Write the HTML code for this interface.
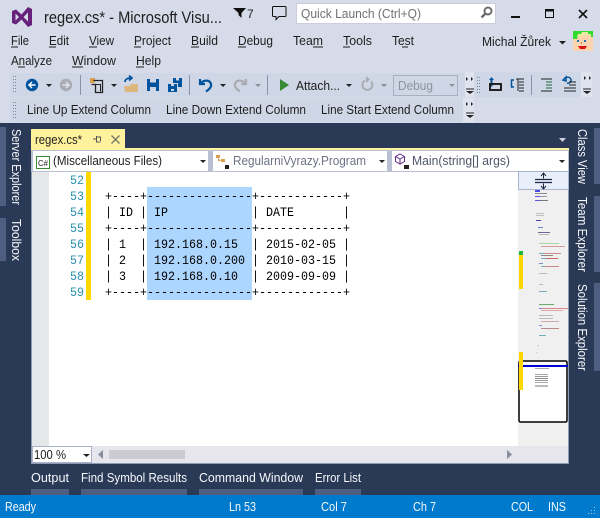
<!DOCTYPE html>
<html><head><meta charset="utf-8"><style>
html,body{margin:0;padding:0;background:#d6dbe9;width:600px;height:518px;overflow:hidden}
svg{display:block}
text{font-family:"Liberation Sans",sans-serif;font-size:12.5px;fill:#1e1e1e;white-space:pre}
.m{font-family:"Liberation Mono",monospace;font-size:12.5px;fill:#000}
.ln{font-family:"Liberation Mono",monospace;font-size:12.5px;fill:#2b91af}
.w{fill:#f6f8fb}
</style></head><body>
<svg width="600" height="518" viewBox="0 0 600 518" xmlns="http://www.w3.org/2000/svg">
<rect width="600" height="518" fill="#d6dbe9"/>
<!-- VS logo -->
<path d="M12 11l4-1.500 5.500 5L28 7l4 2v16l-4 2-6.500-7.500L16 24.500 12 23zM15.500 13.500v7l3.500-3.500zM28 12.500l-4.500 4.500 4.500 4.500z" fill="#68217a" fill-rule="evenodd"/>
<text x="44" y="23" style="font-size:16.5px" textLength="178" lengthAdjust="spacingAndGlyphs">regex.cs* - Microsoft Visu...</text>
<path d="M233 8h13l-4.500 5v5l-3-3v-2z" fill="#111"/>
<text x="247" y="18" style="font-size:12px" fill="#222">7</text>
<path d="M273.500 6.500h11.500a1 1 0 0 1 1 1v8a1 1 0 0 1-1 1h-6l-3 3v-3h-2.500a1 1 0 0 1-1-1v-8a1 1 0 0 1 1-1z" fill="none" stroke="#111" stroke-width="1"/>
<rect x="296.500" y="3.500" width="199" height="20" fill="#fff" stroke="#c9cedb"/>
<text x="301" y="18" style="font-size:13px;fill:#707070" textLength="120" lengthAdjust="spacingAndGlyphs">Quick Launch (Ctrl+Q)</text>
<circle cx="488" cy="11" r="3.500" fill="none" stroke="#6e6e6e" stroke-width="2"/>
<path d="M485.500 13.500l-4 4" stroke="#6e6e6e" stroke-width="2.500" fill="none"/>
<rect x="511" y="16" width="9" height="2" fill="#111"/>
<path d="M545.500 9.500h8v8h-8z" fill="none" stroke="#111"/><rect x="545" y="9" width="9" height="2.500" fill="#111"/>
<path d="M579 10l8 8M587 10l-8 8" stroke="#111" stroke-width="1.600" fill="none"/>
<!-- menu -->
<g fill="#1e1e1e">
<text x="11" y="45" textLength="18" lengthAdjust="spacingAndGlyphs">File</text>
<text x="49" y="45" textLength="20" lengthAdjust="spacingAndGlyphs">Edit</text>
<text x="89" y="45" textLength="25" lengthAdjust="spacingAndGlyphs">View</text>
<text x="134" y="45" textLength="37" lengthAdjust="spacingAndGlyphs">Project</text>
<text x="191" y="45" textLength="27" lengthAdjust="spacingAndGlyphs">Build</text>
<text x="238" y="45" textLength="35" lengthAdjust="spacingAndGlyphs">Debug</text>
<text x="293" y="45" textLength="30" lengthAdjust="spacingAndGlyphs">Team</text>
<text x="343" y="45" textLength="29" lengthAdjust="spacingAndGlyphs">Tools</text>
<text x="392" y="45" textLength="22" lengthAdjust="spacingAndGlyphs">Test</text>
<text x="11" y="65" textLength="41" lengthAdjust="spacingAndGlyphs">Analyze</text>
<text x="72" y="65" textLength="44" lengthAdjust="spacingAndGlyphs">Window</text>
<text x="136" y="65" textLength="25" lengthAdjust="spacingAndGlyphs">Help</text>
<path d="M11 47h7M49 47h7M89 47h8M134 47h7M191 47h8M238 47h8M313 47h10M343 47h7M402 47h6M18 67h7M72 67h11M136 67h8" stroke="#1e1e1e" stroke-width="1"/>
</g>
<text x="482" y="46" textLength="69" lengthAdjust="spacingAndGlyphs">Michal Žůrek</text>
<path d="M559 41h7l-3.500 3.500z" fill="#222"/>
<!-- avatar -->
<rect x="573" y="31" width="20" height="20" fill="#fcd5b0"/>
<path d="M573 31h20v6h-2v-2h-3v-1h-6l-1 2h-3l-1 3h-4z" fill="#2fdc2f"/>
<path d="M577 37l1-3h3l1-2h6v2h3v2l-3-1h-4l-2 2h-3z" fill="#e8e89e"/>
<rect x="577" y="40" width="2" height="2" fill="#2c6fb0"/><rect x="584" y="40" width="2" height="2" fill="#2c6fb0"/>
<rect x="581" y="42" width="1" height="2" fill="#c08060"/>
<path d="M578 46h9l-2 3h-5z" fill="#e01010"/>
<!-- toolbars -->
<rect x="10" y="73" width="455" height="24" fill="#cfd6e5"/>
<rect x="465" y="72" width="9" height="25" fill="#dfe3ee"/>
<rect x="474" y="72" width="107" height="25" fill="#cfd6e5"/>
<rect x="581" y="72" width="11" height="25" fill="#dfe3ee"/>
<rect x="10" y="98" width="453" height="24" fill="#cfd6e5"/>
<rect x="463" y="98" width="11" height="24" fill="#dfe3ee"/>
<g fill="#7f8a9e">
<path d="M13 76h1v1h-1zM15 76h1v1h-1zM13 79h1v1h-1zM15 79h1v1h-1zM13 82h1v1h-1zM15 82h1v1h-1zM13 85h1v1h-1zM15 85h1v1h-1zM13 88h1v1h-1zM15 88h1v1h-1zM13 91h1v1h-1zM15 91h1v1h-1z"/>
<path d="M13 102h1v1h-1zM15 102h1v1h-1zM13 105h1v1h-1zM15 105h1v1h-1zM13 108h1v1h-1zM15 108h1v1h-1zM13 111h1v1h-1zM15 111h1v1h-1zM13 114h1v1h-1zM15 114h1v1h-1zM13 117h1v1h-1zM15 117h1v1h-1z"/>
<path d="M477 77h1v1h-1zM479 77h1v1h-1zM477 80h1v1h-1zM479 80h1v1h-1zM477 83h1v1h-1zM479 83h1v1h-1zM477 86h1v1h-1zM479 86h1v1h-1zM477 89h1v1h-1zM479 89h1v1h-1zM477 92h1v1h-1zM479 92h1v1h-1z"/>
</g>
<circle cx="32" cy="85" r="6.200" fill="#00539c"/>
<path d="M35.500 85h-6M32 82l-3 3 3 3" stroke="#fff" stroke-width="1.500" fill="none"/>
<path d="M46 84h6l-3 3z" fill="#222"/>
<circle cx="66" cy="85" r="6.200" fill="#a9acb2"/>
<path d="M62.500 85h6M66 82l3 3-3 3" stroke="#dfe2e8" stroke-width="1.500" fill="none"/>
<rect x="80" y="75" width="1" height="20" fill="#8a93a5"/>
<rect x="90" y="78" width="5" height="5" fill="#d8a04a"/>
<path d="M93.500 80.500h9v12h-7v-8h-4" fill="none" stroke="#222" stroke-width="1.300"/>
<path d="M95.500 84.500h5v7" fill="none" stroke="#222"/>
<path d="M111 84h6l-3 3z" fill="#222"/>
<path d="M124 86h6l1-2h7v8h-13z" fill="#dcb67a"/>
<path d="M125 82c0-3 3-4 6-4M129 75.500l3 2.500-3 2.500" fill="none" stroke="#00539c" stroke-width="1.700"/>
<path d="M147 79h12v12h-12z" fill="#00539c"/><rect x="150" y="79" width="6" height="3.500" fill="#cfd6e5"/><rect x="150" y="87" width="6" height="4" fill="#cfd6e5"/>
<path d="M168 84h9v8h-9zM173 78h9v9h-4v-4h-5z" fill="#00539c"/><rect x="176" y="78" width="3" height="2.500" fill="#cfd6e5"/><rect x="171" y="84" width="3" height="2" fill="#cfd6e5"/><rect x="171" y="89" width="3" height="2" fill="#cfd6e5"/>
<rect x="189" y="75" width="1" height="20" fill="#8a93a5"/>
<path d="M200 79v5h5M200.500 84c2-4 9-5 10.500 0 .7 3-1.500 5-5 7.500" fill="none" stroke="#00539c" stroke-width="2.200"/>
<path d="M220 84h6l-3 3z" fill="#222"/>
<path d="M246 79v5h-5M245.500 84c-2-4-9-5-10.500 0-.7 3 1.500 5 5 7.500" fill="none" stroke="#a9acb2" stroke-width="2.200"/>
<path d="M255 84h6l-3 3z" fill="#888c96"/>
<rect x="267" y="75" width="1" height="20" fill="#8a93a5"/>
<path d="M280 79l9 6-9 6z" fill="#388a34"/>
<text x="296" y="90" textLength="44" lengthAdjust="spacingAndGlyphs">Attach...</text>
<path d="M346 84h6l-3 3z" fill="#222"/>
<path d="M365 80.500a5 5 0 1 0 6 1" fill="none" stroke="#a9acb2" stroke-width="2"/><path d="M366 76v7l4-3.500z" fill="#a9acb2"/>
<path d="M381 84h6l-3 3z" fill="#888c96"/>
<rect x="393.500" y="75.500" width="64" height="20" fill="#cfd6e5" stroke="#a9b0bf"/>
<text x="398" y="90" textLength="35" lengthAdjust="spacingAndGlyphs" style="fill:#8d93a1">Debug</text>
<path d="M449 84h6l-3 3z" fill="#8d93a1"/>
<!-- overflow -->
<path d="M466 77l2 2-2 2zM471 77l2 2-2 2z" fill="#222"/>
<path d="M466 88.500h8v1h-8zM466 91h8l-4 3z" fill="#222"/>
<path d="M584 76l2 2-2 2zM589 76l2 2-2 2z" fill="#222"/>
<path d="M583 88.500h8v1h-8zM583 91h8l-4 3z" fill="#222"/>
<path d="M466 102l2 2-2 2zM471 102l2 2-2 2z" fill="#222"/>
<path d="M466 112.500h8v1h-8zM466 115h8l-4 3z" fill="#222"/>
<!-- right icons -->
<path d="M489 80l5 0-2.500-3z" fill="#00539c"/><path d="M491.500 79.500v7" stroke="#00539c" stroke-width="2"/>
<rect x="490" y="84" width="11" height="6" fill="none" stroke="#222" stroke-width="2"/>
<path d="M514 80h-2.500v7h2.500" fill="none" stroke="#00539c" stroke-width="1.500"/>
<path d="M516 79h8M519 82h5M519 85h5M519 88h5M519 91h5M518 79v12" stroke="#222" stroke-width="1"/>
<rect x="531" y="75" width="1" height="20" fill="#8a93a5"/>
<path d="M546 82h6M546 85h6M546 88h6" stroke="#1f6b3a" stroke-width="1"/><path d="M541 79h11M541 91h11" stroke="#222"/>
<path d="M566 78a3 3 0 1 1 1 5M563 80l3-3v4z" fill="none" stroke="#00539c" stroke-width="1.500"/>
<path d="M569 82h7M569 85h7M564 88h12M564 91h12" stroke="#222" stroke-width="1"/>
<text x="27" y="114" textLength="124" lengthAdjust="spacingAndGlyphs">Line Up Extend Column</text>
<text x="166" y="114" textLength="140" lengthAdjust="spacingAndGlyphs">Line Down Extend Column</text>
<text x="321" y="114" textLength="133" lengthAdjust="spacingAndGlyphs">Line Start Extend Column</text>
<!-- dock -->
<rect x="0" y="123" width="600" height="372" fill="#2a3a56"/>
<rect x="0" y="127" width="6" height="79" fill="#4d5e80"/>
<rect x="0" y="218" width="6" height="43" fill="#4d5e80"/>
<rect x="594" y="128" width="6" height="56" fill="#4d5e80"/>
<rect x="594" y="196" width="6" height="76" fill="#4d5e80"/>
<rect x="594" y="283" width="6" height="88" fill="#4d5e80"/>
<text class="w" transform="translate(12,129) rotate(90)" textLength="76" lengthAdjust="spacingAndGlyphs">Server Explorer</text>
<text class="w" transform="translate(12,219) rotate(90)" textLength="42" lengthAdjust="spacingAndGlyphs">Toolbox</text>
<text class="w" transform="translate(578,129) rotate(90)" textLength="55" lengthAdjust="spacingAndGlyphs">Class View</text>
<text class="w" transform="translate(578,197) rotate(90)" textLength="75" lengthAdjust="spacingAndGlyphs">Team Explorer</text>
<text class="w" transform="translate(578,284) rotate(90)" textLength="87" lengthAdjust="spacingAndGlyphs">Solution Explorer</text>
<!-- tab -->
<rect x="31" y="129" width="94" height="20" fill="#fff29d"/>
<text x="35" y="144" textLength="47" lengthAdjust="spacingAndGlyphs">regex.cs*</text>
<path d="M93 139h3M96.500 136v6h4M96.500 137h4v4" fill="none" stroke="#555"/>
<path d="M111.500 135.500l8 8M119.500 135.500l-8 8" stroke="#7d7b6a" stroke-width="1.500" fill="none"/>
<path d="M559 138h7l-3.500 4z" fill="#cdd2de"/>
<rect x="31" y="148" width="538" height="3" fill="#fff29d"/>
<!-- nav bar -->
<rect x="31" y="150" width="538" height="22" fill="#b8c0d2"/>
<rect x="33" y="151" width="175" height="20" fill="#fff"/>
<rect x="213" y="151" width="174" height="20" fill="#fff"/>
<rect x="392" y="151" width="176" height="20" fill="#fff"/>
<rect x="36.500" y="156.500" width="13" height="12" fill="#fff" stroke="#388a34"/>
<text x="38" y="166" style="font-size:8px;fill:#222" textLength="10" lengthAdjust="spacingAndGlyphs">C#</text>
<text x="53" y="165" textLength="109" lengthAdjust="spacingAndGlyphs">(Miscellaneous Files)</text>
<path d="M200 160h6l-3 3z" fill="#222"/>
<path d="M216 155h4v3h-4zM221 159h4v3h-4zM218 158v3h3" fill="#d8a04a"/><rect x="225" y="165" width="4" height="4" fill="#222"/>
<text x="233" y="165" textLength="133" lengthAdjust="spacingAndGlyphs" style="fill:#6d7384">RegularniVyrazy.Program</text>
<path d="M379 160h6l-3 3z" fill="#222"/>
<path d="M400 154l4.500 2.500v5l-4.500 2.500-4.500-2.500v-5zM395.500 156.500l4.500 2.500 4.500-2.500M400 159v5" fill="none" stroke="#652d90"/><rect x="404" y="165" width="5" height="4" fill="#222"/>
<text x="412" y="165" textLength="98" lengthAdjust="spacingAndGlyphs" style="fill:#4f5668">Main(string[] args)</text>
<path d="M559 160h6l-3 3z" fill="#222"/>
<!-- editor -->
<rect x="31" y="172" width="538" height="292" fill="#8e9ab5"/>
<rect x="32" y="172" width="536" height="291" fill="#fff"/>
<rect x="32" y="172" width="17" height="274" fill="#e6e7e8"/>
<rect x="86" y="172" width="5" height="128" fill="#ffd800"/>
<rect x="147" y="187" width="105" height="113" fill="#add6ff"/>
<text class="ln" x="70" y="184" textLength="14" lengthAdjust="spacingAndGlyphs">52</text>
<text class="ln" x="70" y="200" textLength="14" lengthAdjust="spacingAndGlyphs">53</text>
<text class="ln" x="70" y="216" textLength="14" lengthAdjust="spacingAndGlyphs">54</text>
<text class="ln" x="70" y="232" textLength="14" lengthAdjust="spacingAndGlyphs">55</text>
<text class="ln" x="70" y="248" textLength="14" lengthAdjust="spacingAndGlyphs">56</text>
<text class="ln" x="70" y="264" textLength="14" lengthAdjust="spacingAndGlyphs">57</text>
<text class="ln" x="70" y="280" textLength="14" lengthAdjust="spacingAndGlyphs">58</text>
<text class="ln" x="70" y="296" textLength="14" lengthAdjust="spacingAndGlyphs">59</text>
<text class="m" x="105" y="200" textLength="245" lengthAdjust="spacingAndGlyphs">+----+---------------+------------+</text>
<text class="m" x="105" y="216" textLength="245" lengthAdjust="spacingAndGlyphs">| ID | IP            | DATE       |</text>
<text class="m" x="105" y="232" textLength="245" lengthAdjust="spacingAndGlyphs">+----+---------------+------------+</text>
<text class="m" x="105" y="248" textLength="245" lengthAdjust="spacingAndGlyphs">| 1  | 192.168.0.15  | 2015-02-05 |</text>
<text class="m" x="105" y="264" textLength="245" lengthAdjust="spacingAndGlyphs">| 2  | 192.168.0.200 | 2010-03-15 |</text>
<text class="m" x="105" y="280" textLength="245" lengthAdjust="spacingAndGlyphs">| 3  | 192.168.0.10  | 2009-09-09 |</text>
<text class="m" x="105" y="296" textLength="245" lengthAdjust="spacingAndGlyphs">+----+---------------+------------+</text>
<!-- minimap -->
<rect x="518" y="189" width="50" height="257" fill="#f0f0f0"/>
<rect x="518.500" y="171.500" width="50" height="18" fill="#e9eefb" stroke="#aab4cc"/>
<path d="M535 179.500h17M535 182.500h17" stroke="#1e2a40" stroke-width="1.200"/>
<path d="M543.500 173.500v5M541 176l2.500-3 2.500 3M543.500 183.500v5M541 186l2.500 3 2.500-3" fill="none" stroke="#1e2a40"/>
<g>
<rect x="535" y="190" width="5" height="2" fill="#4a4aee"/><rect x="535" y="193" width="12" height="1" fill="#888"/>
<rect x="535" y="196" width="5" height="1" fill="#5a5ae8"/><rect x="540" y="196" width="7" height="1" fill="#999"/>
<rect x="535" y="200" width="5" height="1" fill="#5a5ae8"/><rect x="540" y="200" width="8" height="1" fill="#777"/>
<rect x="536" y="213" width="8" height="1" fill="#c0c0c0"/><rect x="536" y="215" width="8" height="1" fill="#c0c0c0"/>
<rect x="536" y="220" width="5" height="1" fill="#44a"/>
<rect x="538" y="227" width="5" height="1" fill="#68c"/>
<rect x="538" y="232" width="12" height="1" fill="#669"/>
<rect x="539" y="234" width="10" height="1" fill="#bbb"/>
<rect x="539" y="243" width="20" height="1" fill="#a8d8a0"/>
<rect x="541" y="246" width="24" height="1" fill="#d89a9a"/>
<rect x="539" y="253" width="5" height="1" fill="#7ab"/><rect x="544" y="253" width="17" height="1" fill="#c88"/>
<rect x="541" y="255" width="12" height="1" fill="#888"/>
<rect x="541" y="258" width="5" height="1" fill="#7ab"/><rect x="546" y="258" width="12" height="1" fill="#c66"/>
<rect x="539" y="263" width="4" height="1" fill="#88c"/>
<rect x="541" y="266" width="4" height="1" fill="#7ab"/><rect x="545" y="266" width="14" height="1" fill="#c88"/>
<rect x="539" y="273" width="8" height="1" fill="#bbb"/>
<rect x="539" y="284" width="4" height="1" fill="#bbb"/>
<rect x="539" y="291" width="8" height="1" fill="#7ab"/>
<rect x="539" y="304" width="15" height="1" fill="#6aaa6a"/>
<rect x="539" y="308" width="4" height="1" fill="#88c"/><rect x="543" y="308" width="25" height="1" fill="#d88"/>
<rect x="541" y="310" width="22" height="1" fill="#daa"/>
<rect x="539" y="315" width="14" height="1" fill="#bbb"/>
<rect x="539" y="318" width="14" height="1" fill="#bbb"/>
<rect x="541" y="321" width="18" height="1" fill="#caa"/>
<rect x="539" y="325" width="3" height="1" fill="#88c"/>
<rect x="541" y="328" width="18" height="1" fill="#b88"/>
<rect x="539" y="335" width="7" height="1" fill="#7ab"/>
<rect x="537" y="345" width="2" height="1" fill="#ccc"/>
<rect x="536" y="352" width="1" height="1" fill="#ccc"/>
</g>
<rect x="519" y="361" width="48" height="61" fill="#fff" stroke="#000" stroke-width="1.500" rx="1.500"/>
<rect x="518" y="365" width="50" height="2" fill="#0000d0"/>
<rect x="535" y="368" width="14" height="1" fill="#aaa"/>
<rect x="535" y="374" width="13" height="1" fill="#aaa"/><rect x="535" y="376" width="13" height="1" fill="#999"/><rect x="535" y="378" width="13" height="1" fill="#888"/><rect x="535" y="380" width="13" height="1" fill="#999"/><rect x="535" y="382" width="13" height="1" fill="#aaa"/><rect x="535" y="385" width="13" height="2" fill="#bbb"/>
<rect x="519" y="251" width="4" height="4" fill="#1fb83f"/>
<rect x="519" y="255" width="4" height="34" fill="#ffd800"/>
<rect x="519" y="352" width="4" height="38" fill="#ffd800"/>
<!-- scrollbar -->
<rect x="32" y="446" width="536" height="17" fill="#e6e6ec"/>
<rect x="32.500" y="446.500" width="59" height="16" fill="#fff" stroke="#a9b2c8"/>
<text x="34" y="459" textLength="32" lengthAdjust="spacingAndGlyphs">100 %</text>
<path d="M83 454h7l-3.500 3z" fill="#222"/>
<path d="M103 450v9l-5-4.500z" fill="#8a8d9b"/>
<rect x="109" y="450" width="76" height="9" fill="#cbcbd1"/>
<path d="M507 450v9l5-4.500z" fill="#8a8d9b"/>
<!-- bottom tabs -->
<rect x="31" y="489" width="38" height="6" fill="#4d5e80"/>
<rect x="81" y="489" width="106" height="6" fill="#4d5e80"/>
<rect x="199" y="489" width="104" height="6" fill="#4d5e80"/>
<rect x="315" y="489" width="46" height="6" fill="#4d5e80"/>
<text class="w" x="31" y="482" textLength="38" lengthAdjust="spacingAndGlyphs">Output</text>
<text class="w" x="81" y="482" textLength="106" lengthAdjust="spacingAndGlyphs">Find Symbol Results</text>
<text class="w" x="199" y="482" textLength="104" lengthAdjust="spacingAndGlyphs">Command Window</text>
<text class="w" x="315" y="482" textLength="46" lengthAdjust="spacingAndGlyphs">Error List</text>
<!-- status -->
<rect x="0" y="495" width="600" height="23" fill="#007acc"/>
<text class="w" x="5" y="511" textLength="31" lengthAdjust="spacingAndGlyphs">Ready</text>
<text class="w" x="229" y="511" textLength="27" lengthAdjust="spacingAndGlyphs">Ln 53</text>
<text class="w" x="321" y="511" textLength="26" lengthAdjust="spacingAndGlyphs">Col 7</text>
<text class="w" x="413" y="511" textLength="23" lengthAdjust="spacingAndGlyphs">Ch 7</text>
<text class="w" x="511" y="511" textLength="22" lengthAdjust="spacingAndGlyphs">COL</text>
<text class="w" x="548" y="511" textLength="18" lengthAdjust="spacingAndGlyphs">INS</text>
<path d="M594 507h1v1h-1zM591 510h1v1h-1zM594 510h1v1h-1zM588 513h1v1h-1zM591 513h1v1h-1zM594 513h1v1h-1z" fill="#9cc9ea"/>
</svg>
</body></html>
